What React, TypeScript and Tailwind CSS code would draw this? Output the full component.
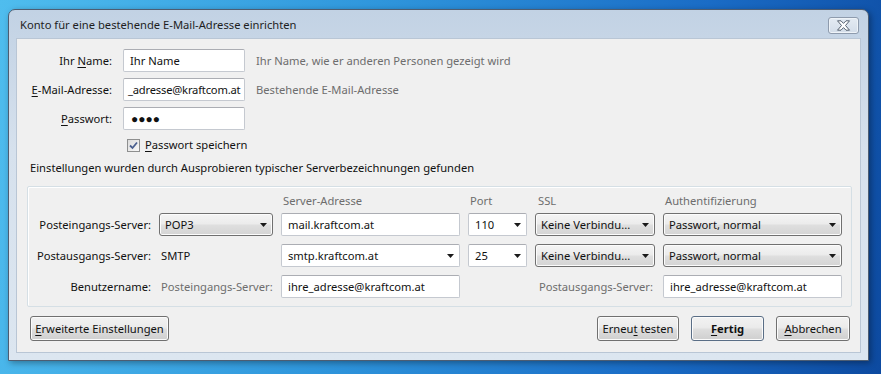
import React from "react";

const font = { fontFamily: '"Noto Sans", "Segoe UI", sans-serif' };

function Arrow() {
  return (
    <svg width="7" height="4" viewBox="0 0 7 4" className="shrink-0">
      <path d="M0 0 H7 L3.5 4 Z" fill="#1a1a1a" />
    </svg>
  );
}

function U({ children }: { children: React.ReactNode }) {
  return <span className="underline underline-offset-2">{children}</span>;
}

function TextInput({ value, w, tight }: { value: string; w: string; tight?: boolean }) {
  return (
    <div
      className={`${w} h-[23px] bg-white border border-[#c5c9d0] border-t-[#abadb3] rounded-[2px] flex items-center ${tight ? "pl-[4px] tracking-[-0.2px]" : "pl-[6px]"} text-[#111] overflow-hidden whitespace-nowrap`}
    >
      {value}
    </div>
  );
}

function Combo({ value, w }: { value: string; w: string }) {
  return (
    <div
      className={`${w} h-[23px] bg-white border border-[#c5c9d0] border-t-[#abadb3] rounded-[2px] flex items-center justify-between pl-[6px] pr-[5px] text-[#111] whitespace-nowrap`}
    >
      <span>{value}</span>
      <Arrow />
    </div>
  );
}

function Select({ value, w }: { value: string; w: string }) {
  return (
    <div
      className={`${w} h-[23px] border border-[#707070] rounded-[3px] bg-[linear-gradient(180deg,#f4f4f4_0%,#ececec_45%,#dedede_55%,#d4d4d4_100%)] shadow-[inset_0_0_0_1px_#fcfcfc] flex items-center justify-between pl-[5px] pr-[5px] text-[#111] whitespace-nowrap`}
    >
      <span>{value}</span>
      <Arrow />
    </div>
  );
}

function Button({ children, w, bold }: { children: React.ReactNode; w: string; bold?: boolean }) {
  return (
    <div
      className={`${w} h-[25px] border ${bold ? "border-[#5a6e86]" : "border-[#707070]"} rounded-[3px] bg-[linear-gradient(180deg,#f2f2f2_0%,#ebebeb_45%,#dddddd_55%,#cfcfcf_100%)] shadow-[inset_0_0_0_1px_#fbfbfb] flex items-center justify-center text-[#111] whitespace-nowrap ${bold ? "font-bold" : ""}`}
    >
      <span>{children}</span>
    </div>
  );
}

const cols = "grid grid-cols-[121px_114px_179px_59px_120px_179px] gap-x-[8px] items-center whitespace-nowrap";

export default function App() {
  return (
    <div
      style={font}
      className="w-[881px] h-[374px] overflow-hidden bg-[linear-gradient(100deg,#4fbdee_0%,#2f96dc_40%,#1a6cc6_75%,#0d4aa0_100%)] pl-[8px] pt-[9px] text-[11.2px] leading-none"
    >
      {/* Window */}
      <div className="w-[861px] h-[352px] rounded-t-[7px] border border-[#4d5d72] bg-[linear-gradient(180deg,#c2d2e4_0%,#d6e1ed_40%,#dce6f0_100%)] shadow-[2px_2px_6px_rgba(0,0,0,0.35)] flex flex-col">
        {/* Title bar */}
        <div className="h-[28px] flex items-center justify-between pl-[11px] pr-[9px] shrink-0">
          <span className="text-[#1e1e1e] text-[11.2px] pt-[2px] whitespace-nowrap">Konto für eine bestehende E-Mail-Adresse einrichten</span>
          <div className="w-[31px] h-[17px] mt-[2px] border border-[#8e9bad] rounded-[3px] bg-[linear-gradient(180deg,#e4ebf3_0%,#d3dde9_100%)] shadow-[inset_0_0_0_1px_#eef3f8] flex items-center justify-center">
            <svg width="15" height="11" viewBox="0 0 15 11">
              <path
                d="M1.5 0.8 H5 L7.5 3.4 L10 0.8 H13.5 L9.5 5.5 L13.5 10.2 H10 L7.5 7.6 L5 10.2 H1.5 L5.5 5.5 Z"
                fill="#ffffff"
                stroke="#54606f"
                strokeWidth="1"
                strokeLinejoin="round"
              />
            </svg>
          </div>
        </div>
        {/* Content */}
        <div className="mx-[7px] mb-[7px] flex-1 bg-[#f0f0f0] border border-[#b9c6d5] flex flex-col text-[#111]">
          {/* Top form */}
          <div className="pt-[10px] flex flex-col gap-[6px]">
            <div className="flex items-center">
              <div className="w-[106px] text-right pr-[11px] whitespace-nowrap">Ihr <U>N</U>ame:</div>
              <TextInput value="Ihr Name" w="w-[122px]" />
              <div className="pl-[11px] text-[#6d6d6d] whitespace-nowrap">Ihr Name, wie er anderen Personen gezeigt wird</div>
            </div>
            <div className="flex items-center">
              <div className="w-[106px] text-right pr-[11px] whitespace-nowrap"><U>E</U>-Mail-Adresse:</div>
              <TextInput value="_adresse@kraftcom.at" w="w-[122px]" tight />
              <div className="pl-[11px] text-[#6d6d6d] whitespace-nowrap">Bestehende E-Mail-Adresse</div>
            </div>
            <div className="flex items-center">
              <div className="w-[106px] text-right pr-[11px] whitespace-nowrap"><U>P</U>asswort:</div>
              <div className="w-[122px] h-[23px] bg-white border border-[#c5c9d0] border-t-[#abadb3] rounded-[2px] flex items-center pl-[7px] text-[12px] tracking-[0px] text-[#111]">
                ●●●●
              </div>
            </div>
            <div className="flex items-center pl-[110px] h-[14px] mt-[2px]">
              <div className="w-[13px] h-[13px] border border-[#8e8f8f] bg-[linear-gradient(135deg,#dcdcdc_0%,#f8f8f8_100%)] flex items-center justify-center">
                <svg width="9" height="9" viewBox="0 0 9 9">
                  <path d="M1 4.5 L3.5 7 L8 1.5" fill="none" stroke="#4a5f8f" strokeWidth="1.8" />
                </svg>
              </div>
              <span className="pl-[5px] whitespace-nowrap"><U>P</U>asswort speichern</span>
            </div>
          </div>
          <div className="pl-[13px] pt-[10px] whitespace-nowrap">Einstellungen wurden durch Ausprobieren typischer Serverbezeichnungen gefunden</div>
          {/* Group box */}
          <div className="ml-[10px] mt-[13px] w-[825px] h-[121px] border border-[#d5dfe5] shadow-[inset_1px_1px_0_#ffffff] rounded-[2px] pl-[2px] pt-[7px]">
            <div className={`${cols} h-[13px] text-[#6d6d6d]`}>
              <div />
              <div />
              <div className="pl-[2px]">Server-Adresse</div>
              <div className="pl-[2px]">Port</div>
              <div className="pl-[3px]">SSL</div>
              <div className="pl-[2px]">Authentifizierung</div>
            </div>
            <div className={`${cols} gap-y-[8px] mt-[6px]`}>
              <div className="text-right">Posteingangs-Server:</div>
              <Select value="POP3" w="w-[114px]" />
              <TextInput value="mail.kraftcom.at" w="w-[179px]" />
              <Combo value="110" w="w-[59px]" />
              <Select value="Keine Verbindu..." w="w-[120px]" />
              <Select value="Passwort, normal" w="w-[179px]" />

              <div className="text-right">Postausgangs-Server:</div>
              <div className="pl-[2px]">SMTP</div>
              <Combo value="smtp.kraftcom.at" w="w-[179px]" />
              <Combo value="25" w="w-[59px]" />
              <Select value="Keine Verbindu..." w="w-[120px]" />
              <Select value="Passwort, normal" w="w-[179px]" />

              <div className="text-right">Benutzername:</div>
              <div className="pl-[2px] text-[#6d6d6d]">Posteingangs-Server:</div>
              <TextInput value="ihre_adresse@kraftcom.at" w="w-[179px]" />
              <div />
              <div className="text-right pr-[2px] text-[#6d6d6d]">Postausgangs-Server:</div>
              <TextInput value="ihre_adresse@kraftcom.at" w="w-[179px]" />
            </div>
          </div>
          {/* Buttons */}
          <div className="flex items-center pl-[13px] pr-[10px] mt-[9px]">
            <Button w="w-[139px]"><U>E</U>rweiterte Einstellungen</Button>
            <div className="flex-1" />
            <div className="flex gap-[12px]">
              <Button w="w-[82px]">Erneu<U>t</U> testen</Button>
              <Button w="w-[73px]" bold><U>F</U>ertig</Button>
              <Button w="w-[74px]"><U>A</U>bbrechen</Button>
            </div>
          </div>
        </div>
      </div>
    </div>
  );
}
